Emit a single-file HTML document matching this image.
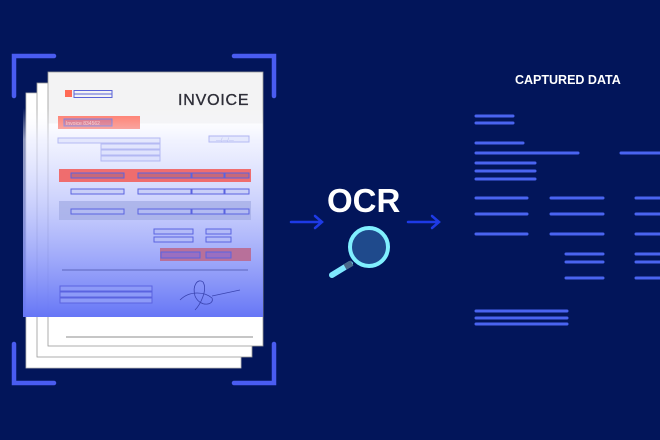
<!DOCTYPE html>
<html><head><meta charset="utf-8"><style>
html,body{margin:0;padding:0;background:#02155a;width:660px;height:440px;overflow:hidden}
svg{display:block}
</style></head><body>
<svg width="660" height="440" viewBox="0 0 660 440" xmlns="http://www.w3.org/2000/svg" font-family="Liberation Sans, sans-serif">
<defs>
<linearGradient id="ov" x1="0" y1="0" x2="0" y2="1">
<stop offset="0" stop-color="#ffffff" stop-opacity="0"/>
<stop offset="0.15" stop-color="#e8ebff" stop-opacity="0.6"/>
<stop offset="1" stop-color="#6676f6" stop-opacity="1"/>
</linearGradient>
</defs>
<rect width="660" height="440" fill="#02155a"/>
<g stroke="#4a5cf0" stroke-width="4.5" fill="none" stroke-linecap="round">
<path d="M14 96 V56 H54"/>
<path d="M234 56 H274 V96"/>
<path d="M14 344 V383 H54"/>
<path d="M234 383 H274 V344"/>
</g>
<rect x="26" y="93" width="215" height="275" fill="#fff" stroke="#bbb" stroke-width="0.8"/>
<rect x="37" y="83" width="215" height="274" fill="#fff" stroke="#999" stroke-width="0.8"/>
<rect x="48" y="72" width="215" height="274" fill="#fff" stroke="#999" stroke-width="0.8"/>
<rect x="48.5" y="72.5" width="214" height="51" fill="#f3f3f4"/>
<text x="178" y="105" font-size="16" fill="#2e2e38" stroke="#2e2e38" stroke-width="0.35" letter-spacing="0.8">INVOICE</text>
<rect x="65" y="90" width="7" height="7" fill="#ff6a55"/>
<g fill="none" stroke="#5a63d8" stroke-width="1">
<rect x="74" y="90.5" width="38" height="3.5"/><rect x="74" y="94" width="38" height="3.5"/>
</g>
<rect x="58" y="116" width="82" height="13" fill="#ff705f"/>
<rect x="64" y="119" width="48" height="7" fill="#d45a70" stroke="#5a63d8" stroke-width="1"/>
<text x="66" y="125" font-size="5" fill="#f3c0c0">Invoice 834562</text>
<g fill="#dfe3fb" stroke="#6a72e0" stroke-width="1">
<rect x="58" y="138" width="102" height="5"/>
<rect x="101" y="144" width="59" height="5"/><rect x="101" y="150" width="59" height="5"/><rect x="101" y="156" width="59" height="5"/>
<rect x="209" y="136" width="40" height="6"/>
</g>
<text x="216" y="141.5" font-size="5" fill="#5a63d8">—/—/—</text>
<rect x="23" y="108" width="240" height="209" fill="url(#ov)"/>
<rect x="59" y="169" width="192" height="13" fill="#ef6d6e"/>
<rect x="59" y="201" width="192" height="19" fill="#a6afe6" opacity="0.8"/>
<rect x="160" y="248" width="91" height="13" fill="#b8709a"/>
<g fill="none" stroke="#5a63e0" stroke-width="1">
<rect x="71" y="173" width="53" height="5" fill="#c7687a"/><rect x="138" y="173" width="53" height="5" fill="#c7687a"/><rect x="192" y="173" width="32" height="5" fill="#c7687a"/><rect x="225" y="173" width="24" height="5" fill="#c7687a"/>
<rect x="71" y="189" width="53" height="5" fill="#c9cff8"/><rect x="138" y="189" width="53" height="5" fill="#c9cff8"/><rect x="192" y="189" width="32" height="5" fill="#c9cff8"/><rect x="225" y="189" width="24" height="5" fill="#c9cff8"/>
<rect x="71" y="209" width="53" height="5" fill="#b3bbf2"/><rect x="138" y="209" width="53" height="5" fill="#b3bbf2"/><rect x="192" y="209" width="32" height="5" fill="#b3bbf2"/><rect x="225" y="209" width="24" height="5" fill="#b3bbf2"/>
<rect x="154" y="229" width="39" height="5" fill="#b3bbf8"/><rect x="154" y="237" width="39" height="5" fill="#b3bbf8"/>
<rect x="206" y="229" width="25" height="5" fill="#b3bbf8"/><rect x="206" y="237" width="25" height="5" fill="#b3bbf8"/>
<rect x="161" y="252" width="39" height="6" fill="#9a6fc0"/><rect x="206" y="252" width="25" height="6" fill="#9a6fc0"/>
<rect x="60" y="286" width="92" height="5" fill="#8d9af8"/><rect x="60" y="292" width="92" height="5" fill="#8d9af8"/><rect x="60" y="298" width="92" height="5" fill="#8d9af8"/>
</g>
<line x1="62" y1="270" x2="248" y2="270" stroke="#4a52a8" stroke-width="0.8"/>
<path d="M180 300 C190 290 205 292 212 298 C215 305 200 308 195 296 C192 285 198 278 203 282 C208 290 200 305 195 310 M212 296 L240 290" fill="none" stroke="#3a44b0" stroke-width="0.8"/>
<line x1="66" y1="337" x2="253" y2="337" stroke="#666" stroke-width="0.8"/>
<text x="327" y="212" font-size="33" font-weight="bold" fill="#ffffff">OCR</text>
<g stroke="#1e3ae6" stroke-width="2.5" fill="none" stroke-linecap="round">
<path d="M291 222 H321 M315 216 L322 222 L315 228"/>
<path d="M408 222 H438 M432 216 L439 222 L432 228"/>
</g>
<line x1="350" y1="264" x2="332" y2="275" stroke="#7fe8ff" stroke-width="6" stroke-linecap="round"/>
<line x1="352" y1="263" x2="345" y2="267" stroke="#4a6a8a" stroke-width="6"/>
<circle cx="369" cy="247" r="19" fill="#1f4a8c" stroke="#80f0ff" stroke-width="4"/>
<text x="515" y="84" font-size="12.5" font-weight="bold" fill="#ffffff">CAPTURED DATA</text>
<g stroke="#4a64f0" stroke-width="3" stroke-linecap="round">
<path d="M476 116 H513 M476 123 H513 M476 143 H523 M476 153 H578 M621 153 H662 M476 163 H535 M476 171 H535 M476 179 H535"/>
<path d="M476 198 H527 M551 198 H603 M636 198 H662"/>
<path d="M476 214 H527 M551 214 H603 M636 214 H662"/>
<path d="M476 234 H527 M551 234 H603 M636 234 H662"/>
<path d="M566 254 H603 M636 254 H662 M566 262 H603 M636 262 H662 M566 278 H603 M636 278 H662"/>
<path d="M476 311 H567 M476 318 H567 M476 324 H567"/>
</g>
</svg>
</body></html>
